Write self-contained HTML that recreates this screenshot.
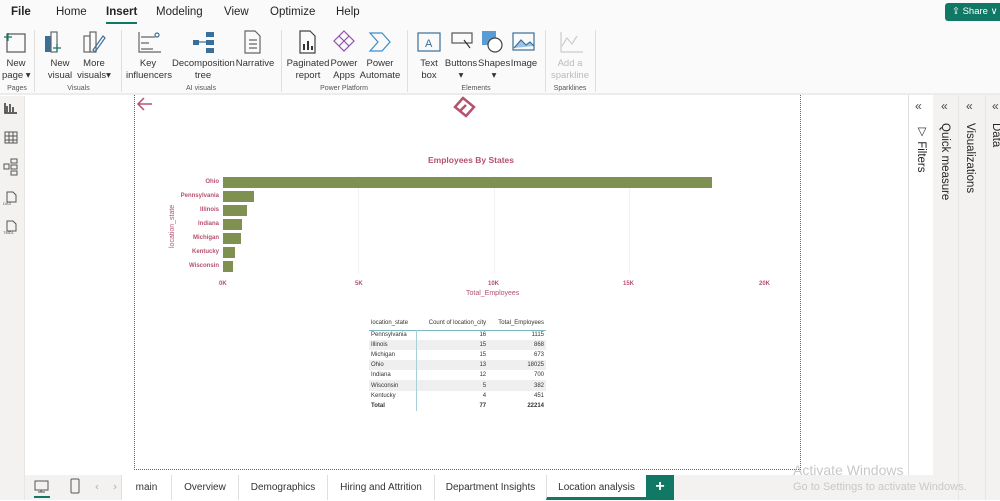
<!DOCTYPE html>
<html><head><meta charset="utf-8"><style>
*{margin:0;padding:0;box-sizing:border-box}
body{width:1000px;height:500px;overflow:hidden;background:#fff;font-family:"Liberation Sans",sans-serif;color:#252423;position:relative}
.a{position:absolute}
.t{position:absolute;white-space:nowrap}
.rib{font-size:9.5px;text-align:center;line-height:12px;color:#333}
.grp{font-size:7px;color:#555;text-align:center}
.sep{position:absolute;top:30px;width:1px;height:62px;background:#e1dfdd}
.lbl{font-size:6px;font-weight:bold;color:#b5526e;text-align:right;width:60px}
.bar{position:absolute;left:223px;height:11px;background:#7f9150}
.ax{font-size:6px;font-weight:bold;color:#b5526e}
table{border-collapse:collapse;font-size:6px;color:#333}
td{height:10.1px;padding:0 2px}
.vt{position:absolute;writing-mode:vertical-rl;font-size:11.5px;color:#252423}
.tab{position:absolute;top:475px;height:25px;font-size:10px;line-height:26px;text-align:center;border-left:1px solid #e1dfdd;color:#333}
</style></head><body>
<div class="a" style="left:0;top:0;width:1000px;height:95px;background:#fafafa;border-bottom:2px solid #ececec"></div>
<div class="t" style="left:11px;top:6px;font-size:11.5px;font-weight:bold">File</div>
<div class="t" style="left:56px;top:6px;font-size:11.5px">Home</div>
<div class="t" style="left:106px;top:6px;font-size:11.5px;font-weight:bold">Insert</div>
<div class="a" style="left:106px;top:22px;width:31px;height:2px;background:#117865"></div>
<div class="t" style="left:156px;top:6px;font-size:11.5px">Modeling</div>
<div class="t" style="left:224px;top:6px;font-size:11.5px">View</div>
<div class="t" style="left:270px;top:6px;font-size:11.5px">Optimize</div>
<div class="t" style="left:336px;top:6px;font-size:11.5px">Help</div>
<div class="a" style="left:945px;top:3px;width:60px;height:18px;background:#117865;border-radius:3px"></div>
<div class="t" style="left:952px;top:6px;font-size:9.5px;color:#fff">⇪ Share ∨</div>

<svg class="a" style="left:0;top:28px" width="600" height="30" fill="none" stroke-width="1.2">
<rect x="7" y="6" width="18" height="18" stroke="#555"/><path d="M8 5v8M4 9h8" stroke="#117865"/>
<rect x="45" y="8" width="6" height="16" fill="#3a6f9a"/><rect x="51" y="4" width="6" height="20" stroke="#666"/><path d="M57 16v8M53 20h8" stroke="#117865"/>
<rect x="84" y="8" width="6" height="16" stroke="#666"/><rect x="90" y="4" width="6" height="20" stroke="#666"/><path d="M93 22l10-14 2 2-10 14z" stroke="#3a6f9a"/>
<path d="M139 4v20h22M141 9h14M141 15h8M141 21h12" stroke="#666"/><circle cx="157" cy="7" r="2" stroke="#3a6f9a"/>
<rect x="193" y="12" width="6" height="5" fill="#3a6f9a"/><rect x="206" y="4" width="8" height="5" fill="#3a6f9a"/><rect x="206" y="12" width="8" height="5" fill="#3a6f9a"/><rect x="206" y="20" width="8" height="5" fill="#3a6f9a"/><path d="M199 14h7" stroke="#3a6f9a"/>
<path d="M245 3h10l5 5v17h-15z" stroke="#666"/><path d="M249 12h8M249 16h8M249 20h8" stroke="#666"/>
<path d="M300 3h10l5 5v17h-15z" stroke="#444"/><rect x="303" y="16" width="2" height="6" fill="#333"/><rect x="307" y="13" width="2" height="9" fill="#333"/><rect x="311" y="18" width="2" height="4" fill="#333"/>
<path d="M344 3l10 10-10 10-10-10z" stroke="#8e4fb0"/><path d="M339 8l10 10M349 8l-10 10" stroke="#8e4fb0"/>
<path d="M370 5h12l8 9-8 9h-12l8-9z" stroke="#3a8ec9"/>
<rect x="418" y="5" width="22" height="18" stroke="#3a6f9a"/><text x="425" y="19" font-size="11" fill="#3a6f9a" stroke="none">A</text>
<rect x="452" y="5" width="20" height="10" stroke="#555"/><path d="M464 12l6 8" stroke="#333"/>
<rect x="482" y="3" width="14" height="14" fill="#5b9bd5"/><circle cx="495" cy="17" r="7" fill="#fff" stroke="#444"/>
<rect x="513" y="5" width="21" height="17" stroke="#3a6f9a"/><path d="M514 20l7-8 5 5 4-3 4 4" stroke="#3a6f9a" fill="#9cc3e6"/>
<path d="M561 4v20h22M562 18l5-8 5 6 5-8" stroke="#ccc"/>
</svg>
<div class="t rib" style="left:2px;top:58px;width:28px">New<br>page ▾</div>
<div class="t rib" style="left:46px;top:58px;width:28px">New<br>visual</div>
<div class="t rib" style="left:76px;top:58px;width:36px">More<br>visuals▾</div>
<div class="t rib" style="left:126px;top:58px;width:44px">Key<br>influencers</div>
<div class="t rib" style="left:172px;top:58px;width:62px">Decomposition<br>tree</div>
<div class="t rib" style="left:235px;top:58px;width:40px">Narrative</div>
<div class="t rib" style="left:286px;top:58px;width:44px">Paginated<br>report</div>
<div class="t rib" style="left:330px;top:58px;width:28px">Power<br>Apps</div>
<div class="t rib" style="left:358px;top:58px;width:44px">Power<br>Automate</div>
<div class="t rib" style="left:416px;top:58px;width:26px">Text<br>box</div>
<div class="t rib" style="left:444px;top:58px;width:34px">Buttons<br>▾</div>
<div class="t rib" style="left:478px;top:58px;width:32px">Shapes<br>▾</div>
<div class="t rib" style="left:510px;top:58px;width:28px">Image</div>
<div class="t rib" style="left:548px;top:58px;width:44px;color:#bbb">Add a<br>sparkline</div>
<div class="t grp" style="left:0;top:85px;width:34px">Pages</div>
<div class="t grp" style="left:36px;top:85px;width:85px">Visuals</div>
<div class="t grp" style="left:121px;top:85px;width:160px">AI visuals</div>
<div class="t grp" style="left:281px;top:85px;width:126px">Power Platform</div>
<div class="t grp" style="left:407px;top:85px;width:138px">Elements</div>
<div class="t grp" style="left:545px;top:85px;width:50px">Sparklines</div>
<div class="sep" style="left:34px"></div><div class="sep" style="left:121px"></div><div class="sep" style="left:281px"></div><div class="sep" style="left:407px"></div><div class="sep" style="left:545px"></div><div class="sep" style="left:595px"></div>

<div class="a" style="left:0;top:96px;width:25px;height:404px;background:#f3f2f1;border-right:1px solid #e6e6e6"></div>
<svg class="a" style="left:0;top:96px" width="25" height="150" fill="none" stroke="#555" stroke-width="1">
<path d="M5 7v10h12M7 10v6M10 8v8M13 11v5" stroke="#333" stroke-width="1.5"/>
<rect x="5" y="36" width="12" height="11"/><path d="M5 40h12M5 44h12M9 36v11M13 36v11"/>
<rect x="4" y="68" width="5" height="5"/><rect x="11" y="63" width="6" height="4"/><rect x="11" y="69" width="6" height="4"/><rect x="11" y="75" width="6" height="4"/>
<path d="M7 96h6l3 3v7h-9z"/><text x="3" y="109" font-size="4" fill="#555" stroke="none">DAX</text>
<path d="M7 125h6l3 3v7h-9z"/><text x="3" y="138" font-size="4" fill="#555" stroke="none">TMDL</text>
</svg>

<div class="a" style="left:134px;top:95px;width:667px;height:375px;border:1px dotted #666;border-top:none"></div>
<svg class="a" style="left:136px;top:96px" width="20" height="16" fill="none" stroke="#b5526e" stroke-width="1.5"><path d="M16 8H2M8 2L2 8l6 6"/></svg>
<svg class="a" style="left:452px;top:96px" width="26" height="22" fill="none" stroke="#b5526e" stroke-width="2.5"><path d="M11 2l11 9-8 9-11-9z"/><path d="M8 15l6-6"/></svg>

<div class="t" style="left:428px;top:155px;font-size:8.5px;font-weight:bold;color:#b5526e">Employees By States</div>
<div class="a" style="left:358px;top:176px;width:1px;height:98px;background:#f2f2f2"></div>
<div class="a" style="left:494px;top:176px;width:1px;height:98px;background:#f2f2f2"></div>
<div class="a" style="left:629px;top:176px;width:1px;height:98px;background:#f2f2f2"></div>
<div class="t lbl" style="left:159px;top:179px">Ohio</div><div class="bar" style="top:177px;width:489px"></div>
<div class="t lbl" style="left:159px;top:193px">Pennsylvania</div><div class="bar" style="top:191px;width:31px"></div>
<div class="t lbl" style="left:159px;top:207px">Illinois</div><div class="bar" style="top:205px;width:24px"></div>
<div class="t lbl" style="left:159px;top:221px">Indiana</div><div class="bar" style="top:219px;width:19px"></div>
<div class="t lbl" style="left:159px;top:235px">Michigan</div><div class="bar" style="top:233px;width:18px"></div>
<div class="t lbl" style="left:159px;top:249px">Kentucky</div><div class="bar" style="top:247px;width:12px"></div>
<div class="t lbl" style="left:159px;top:263px">Wisconsin</div><div class="bar" style="top:261px;width:10px"></div>
<div class="t" style="left:169px;top:248px;font-size:7px;color:#b5526e;transform:rotate(-90deg);transform-origin:0 0">location_state</div>
<div class="t ax" style="left:219px;top:281px">0K</div>
<div class="t ax" style="left:355px;top:281px">5K</div>
<div class="t ax" style="left:488px;top:281px">10K</div>
<div class="t ax" style="left:623px;top:281px">15K</div>
<div class="t ax" style="left:759px;top:281px">20K</div>
<div class="t" style="left:466px;top:290px;font-size:7px;color:#b5526e">Total_Employees</div>

<table class="a" style="left:369px;top:317px;width:177px">
<tr style="border-bottom:1px solid #7ab8c4"><td style="height:13px">location_state</td><td style="text-align:right">Count of location_city</td><td style="text-align:right">Total_Employees</td></tr>
<tr><td style="border-right:1px solid #a8d0d8">Pennsylvania</td><td align="right">16</td><td align="right">1115</td></tr>
<tr style="background:#efefef"><td style="border-right:1px solid #a8d0d8">Illinois</td><td align="right">15</td><td align="right">868</td></tr>
<tr><td style="border-right:1px solid #a8d0d8">Michigan</td><td align="right">15</td><td align="right">673</td></tr>
<tr style="background:#efefef"><td style="border-right:1px solid #a8d0d8">Ohio</td><td align="right">13</td><td align="right">18025</td></tr>
<tr><td style="border-right:1px solid #a8d0d8">Indiana</td><td align="right">12</td><td align="right">700</td></tr>
<tr style="background:#efefef"><td style="border-right:1px solid #a8d0d8">Wisconsin</td><td align="right">5</td><td align="right">382</td></tr>
<tr><td style="border-right:1px solid #a8d0d8">Kentucky</td><td align="right">4</td><td align="right">451</td></tr>
<tr style="font-weight:bold"><td style="border-right:1px solid #a8d0d8">Total</td><td align="right">77</td><td align="right">22214</td></tr>
</table>

<div class="a" style="left:908px;top:95px;width:1px;height:405px;background:#ddd"></div>
<div class="a" style="left:933px;top:95px;width:67px;height:405px;background:#f3f2f1"></div>
<div class="a" style="left:958px;top:95px;width:1px;height:405px;background:#e6e6e6"></div>
<div class="a" style="left:985px;top:95px;width:1px;height:405px;background:#e6e6e6"></div>
<div class="t" style="left:915px;top:99px;font-size:12px;color:#444">«</div>
<div class="t" style="left:941px;top:99px;font-size:12px;color:#444">«</div>
<div class="t" style="left:966px;top:99px;font-size:12px;color:#444">«</div>
<div class="t" style="left:992px;top:99px;font-size:12px;color:#444">«</div>
<div class="vt" style="left:914px;top:124px">▽ Filters</div>
<div class="vt" style="left:939px;top:123px">Quick measure</div>
<div class="vt" style="left:964px;top:123px">Visualizations</div>
<div class="vt" style="left:990px;top:123px">Data</div>

<div class="a" style="left:25px;top:475px;width:908px;height:25px;background:#f3f2f1"></div>
<svg class="a" style="left:30px;top:477px" width="100" height="22" fill="none" stroke="#555"><rect x="5" y="4" width="13" height="9"/><path d="M11 13v2M8 15h7"/><path d="M4 20h16" stroke="#117865" stroke-width="2"/><rect x="41" y="2" width="8" height="14" rx="1"/><path d="M68 8l-2 2 2 2M84 8l2 2-2 2" stroke="#bbb"/></svg>
<div class="tab" style="left:121px;width:50px;background:#fff">main</div>
<div class="tab" style="left:171px;width:67px;background:#fff">Overview</div>
<div class="tab" style="left:238px;width:89px;background:#fff">Demographics</div>
<div class="tab" style="left:327px;width:107px;background:#fff">Hiring and Attrition</div>
<div class="tab" style="left:434px;width:112px;background:#fff">Department Insights</div>
<div class="tab" style="left:546px;width:100px;background:#fff;border-bottom:3px solid #117865;line-height:26px">Location analysis</div>
<div class="a" style="left:646px;top:475px;width:28px;height:25px;background:#117865;color:#fff;font-size:16px;font-weight:bold;text-align:center;line-height:24px">+</div>
<div class="t" style="left:793px;top:462px;font-size:14px;color:#c8c8c8">Activate Windows</div>
<div class="t" style="left:793px;top:481px;font-size:11px;color:#c8c8c8">Go to Settings to activate Windows.</div>
</body></html>
